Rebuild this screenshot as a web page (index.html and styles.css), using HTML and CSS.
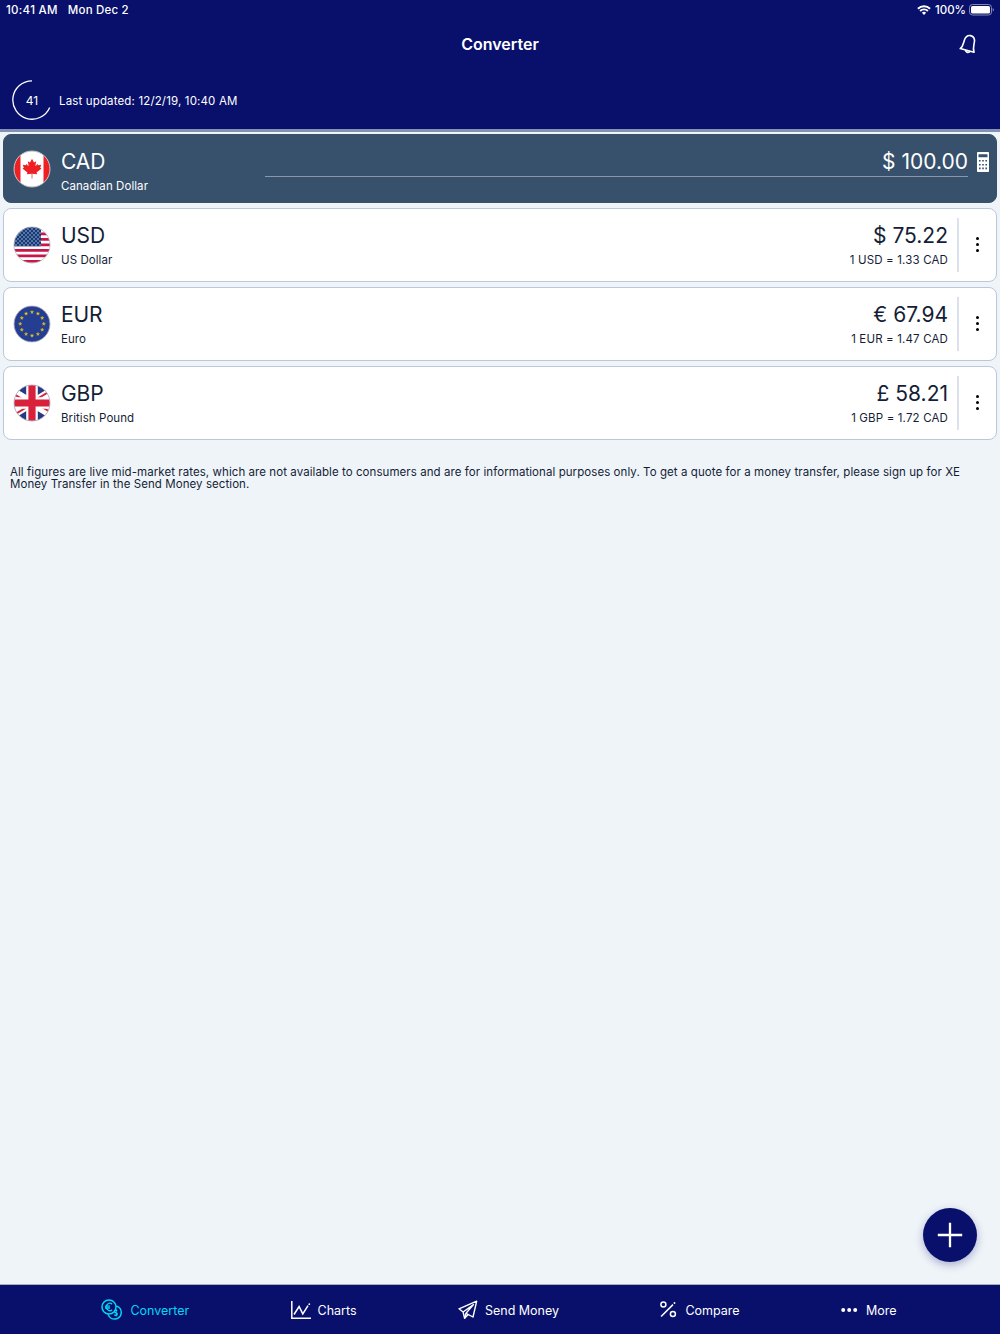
FILE: index.html
```html
<!DOCTYPE html>
<html lang="en">
<head>
  <meta charset="UTF-8" />
  <meta name="viewport" content="width=device-width, initial-scale=1.0" />
  <title>Converter</title>
  <link rel="stylesheet" href="styles.css">
</head>
<body>
  <header class="header">
    <div class="status-bar">
      <span class="time">10:41 AM</span>
      <span class="date">Mon Dec 2</span>
      <svg class="wifi" width="14" height="10" viewBox="0 0 14 10" fill="none" stroke="#fff" stroke-width="1.9">
        <path d="M.9 3.7a8.8 8.8 0 0 1 12.2 0M3.1 6a5.6 5.6 0 0 1 7.8 0" />
        <path d="M7 9.9 4.9 7.7a3 3 0 0 1 4.2 0z" fill="#fff" stroke="none" />
      </svg>
      <span class="percent">100%</span>
      <svg class="battery" width="25" height="12" viewBox="0 0 25 12">
        <rect x=".5" y=".5" width="22" height="10.5" rx="3" fill="none" stroke="#8488b5" />
        <rect x="2" y="2" width="19" height="7.5" rx="1.6" fill="#fff" />
        <path d="M23.7 4v3.6q1.2-.6 1.2-1.8T23.7 4z" fill="#8488b5" />
      </svg>
    </div>
    <div class="title-bar">
      <h1>Converter</h1>
      <svg class="bell" width="20" height="22" viewBox="0 0 20 22" fill="none" stroke="#fff" stroke-width="1.6" stroke-linejoin="round" stroke-linecap="round">
        <path d="M2.2 15.6C5 13.5 5.2 11.5 6.2 7.7C7.200 4 9.300 2.200 12.600 2.600C16 3.400 17 6 16.300 9.600C15.500 13.500 14.800 15.500 16 19.300Z" />
        <path d="M7.600 17.800q1.700 2.600 4 1" />
      </svg>
    </div>
    <div class="update-row">
      <div class="timer">
        <svg width="40" height="40" viewBox="0 0 40 40" fill="none" stroke="#fff" stroke-width="1.3">
          <path d="M20 .8A19.200 19.200 0 1 0 37.700 27.500" />
        </svg>
        <span>41</span>
      </div>
      <span class="updated">Last updated: 12/2/19, 10:40 AM</span>
    </div>
  </header>

  <main class="content">
    <section class="card base">
      <svg class="flag" width="38" height="38" viewBox="0 0 38 38">
        <clipPath id="round"><circle cx="19" cy="19" r="18" /></clipPath>
        <g clip-path="url(#round)">
          <rect width="38" height="38" fill="#fff" />
          <path d="M0 0h7.500v38H0zM30.500 0H38v38h-7.500z" fill="#ee2024" />
          <path d="M19 8.800 21 12.400 23.200 11.300 22.300 16.300 24.700 13.900 25.200 15.300 28.200 14.800 27.200 17.700 28.500 18.500 23.600 22.500 24.100 24.300 19.350 23.700V28.500h-.7V23.700L13.900 24.300 14.400 22.500 9.500 18.500 10.800 17.700 9.800 14.800 12.800 15.300 13.300 13.900 15.700 16.300 14.800 11.300 17 12.400z" fill="#ee2024" />
        </g>
        <circle cx="19" cy="19" r="18" fill="none" stroke="#b9bdc3" />
      </svg>
      <div class="currency">
        <div class="code">CAD</div>
        <div class="name">Canadian Dollar</div>
      </div>
      <div class="amount-input">$ 100.00</div>
      <svg class="calculator" width="12" height="20" viewBox="0 0 12 20">
        <rect width="12" height="20" rx=".8" fill="#fff" />
        <g fill="#37506c">
          <rect x="1.500" y="2.200" width="9" height="3" rx=".5" />
          <path d="M2 8h1.600v1.600H2zM5.200 8h1.600v1.600H5.200zM8.400 8H10v1.600H8.400zM2 12h1.600v1.600H2zM5.200 12h1.600v1.600H5.200zM8.400 12H10v1.600H8.400zM2 15.600h1.600v1.600H2zM5.200 15.600h1.600v1.600H5.200zM8.400 15.600H10v1.600H8.400z" />
        </g>
      </svg>
    </section>

    <section class="card">
      <svg class="flag" width="38" height="38" viewBox="0 0 38 38">
        <defs>
          <pattern id="stars" width="4" height="4" patternUnits="userSpaceOnUse">
            <circle cx="1" cy="1" r=".75" fill="#c3cce0" /><circle cx="3" cy="3" r=".75" fill="#c3cce0" />
          </pattern>
        </defs>
        <g clip-path="url(#round)">
          <rect width="38" height="38" fill="#fff" />
          <path d="M0 2.400h38M0 7.900h38M0 13.400h38M0 18.900h38M0 24.400h38M0 29.900h38M0 35.400h38" stroke="#c8164a" stroke-width="2.750" />
          <rect width="28" height="20.200" fill="#143b78" />
          <rect width="28" height="20" fill="url(#stars)" />
        </g>
        <circle cx="19" cy="19" r="18" fill="none" stroke="#b8b8c2" stroke-width=".8" />
      </svg>
      <div class="currency">
        <div class="code">USD</div>
        <div class="name">US Dollar</div>
      </div>
      <div class="rate">
        <div class="value">$ 75.22</div>
        <div class="unit">1 USD = 1.33 CAD</div>
      </div>
      <div class="menu"><i></i><i></i><i></i></div>
    </section>

    <section class="card">
      <svg class="flag" width="38" height="38" viewBox="0 0 38 38">
        <circle cx="19" cy="19" r="18" fill="#253e91" stroke="#b5b5b8" stroke-width=".8" />
        <g fill="#e5c61b">
          <path id="star" d="M19 5.300l.45 1.150 1.250.05-1 .8.350 1.200L19 7.800l-1.050.7.350-1.200-1-.8 1.250-.05z" stroke="#e5c61b" stroke-width=".3" />
          <use href="#star" x="5.900" y="1.600" />
          <use href="#star" x="10.200" y="5.900" />
          <use href="#star" x="11.800" y="11.800" />
          <use href="#star" x="10.200" y="17.700" />
          <use href="#star" x="5.900" y="22" />
          <use href="#star" y="23.600" />
          <use href="#star" x="-5.900" y="22" />
          <use href="#star" x="-10.200" y="17.700" />
          <use href="#star" x="-11.800" y="11.800" />
          <use href="#star" x="-10.200" y="5.900" />
          <use href="#star" x="-5.900" y="1.600" />
        </g>
      </svg>
      <div class="currency">
        <div class="code">EUR</div>
        <div class="name">Euro</div>
      </div>
      <div class="rate">
        <div class="value">€ 67.94</div>
        <div class="unit">1 EUR = 1.47 CAD</div>
      </div>
      <div class="menu"><i></i><i></i><i></i></div>
    </section>

    <section class="card">
      <svg class="flag" width="38" height="38" viewBox="0 0 38 38">
        <g clip-path="url(#round)">
          <rect width="38" height="38" fill="#293b80" />
          <path d="M-9 2 47 36M47 2-9 36" stroke="#fff" stroke-width="8" />
          <path d="M-9 4 19 21M47 1 19 18M-9 37 19 20M47 34 19 17" stroke="#d8213b" stroke-width="2" />
          <path d="M19 0v38M0 19h38" stroke="#fff" stroke-width="11.600" />
          <path d="M19 0v38M0 19h38" stroke="#d8213b" stroke-width="7.200" />
        </g>
        <circle cx="19" cy="19" r="18" fill="none" stroke="#b8b8c2" stroke-width=".8" />
      </svg>
      <div class="currency">
        <div class="code">GBP</div>
        <div class="name">British Pound</div>
      </div>
      <div class="rate">
        <div class="value">£ 58.21</div>
        <div class="unit">1 GBP = 1.72 CAD</div>
      </div>
      <div class="menu"><i></i><i></i><i></i></div>
    </section>

    <p class="disclaimer">All figures are live mid-market rates, which are not available to consumers and are for informational purposes only. To get a quote for a money transfer, please sign up for XE<br>Money Transfer in the Send Money section.</p>

    <button class="add" aria-label="Add currency">
      <svg width="26" height="26" viewBox="0 0 26 26" stroke="#fff" stroke-width="2.300"><path d="M13 .8v24.400M.8 13h24.400" /></svg>
    </button>
  </main>

  <nav class="tabs">
    <a class="tab active">
      <svg width="22" height="22" viewBox="0 0 22 22" fill="none" stroke="currentColor" stroke-width="1.500">
        <circle cx="8" cy="8" r="7" />
        <path d="M15.200 6.900a6.700 6.700 0 1 1-8.100 8.200" />
        <path d="M11.200 5.200a3.600 3.600 0 1 0 0 5.500M4 7.200h5M4 9h5" stroke-width="1.300" />
        <path d="M16.200 11.900c-1.200-1.200-3.400-.3-2.700 1.100.7 1.300 2.600.5 2.900 2 .1 1.600-2.300 1.900-3.300.6M15.200 10.300v7.200" stroke-width="1.100" />
      </svg>
      <span>Converter</span>
    </a>
    <a class="tab">
      <svg width="20" height="20" viewBox="0 0 20 20" fill="none" stroke="currentColor" stroke-width="1.500">
        <path d="M.8 1v17.200H20" />
        <path d="M3 14.500 8.100 6.500l3.700 7.400L17 5.600" />
        <circle cx="18.300" cy="4.200" r=".9" fill="currentColor" stroke="none" />
      </svg>
      <span>Charts</span>
    </a>
    <a class="tab">
      <svg width="20" height="20" viewBox="0 0 20 20" fill="none" stroke="currentColor" stroke-width="1.400" stroke-linejoin="round">
        <path d="M1 8.800 18.700 1.200 15 17 10.200 14.500 6.600 18.300 5.100 12z" />
        <path d="M5.100 12 15.500 4.600 8 13.300 6.600 18.300M8 13.300l2.200 1.200" />
      </svg>
      <span>Send Money</span>
    </a>
    <a class="tab">
      <svg width="18" height="20" viewBox="0 0 18 20" fill="none" stroke="currentColor" stroke-width="1.500">
        <circle cx="3.400" cy="4.600" r="2.500" />
        <circle cx="12.900" cy="14" r="2.500" />
        <path d="M1.100 16.500 13 4.600" />
        <circle cx="14.500" cy="3" r=".9" fill="currentColor" stroke="none" />
      </svg>
      <span>Compare</span>
    </a>
    <a class="tab">
      <svg width="18" height="6" viewBox="0 0 18 6" fill="currentColor">
        <circle cx="2.200" cy="3" r="2" /><circle cx="8.200" cy="3" r="2" /><circle cx="14.200" cy="3" r="2" />
      </svg>
      <span>More</span>
    </a>
  </nav>
</body>
</html>
```
FILE: styles.css
```css
:root {
  --navy: #08106b;
  --ink: #141e37;
  --bg: #eff4f9;
  --line: #bdc7dc;
}

* {
  box-sizing: border-box;
}

body {
  margin: 0;
  height: 1334px;
  display: flex;
  flex-direction: column;
  font-family: Inter, "Liberation Sans", sans-serif;
  font-size: 11.5px;
  letter-spacing: 0.07px;
  color: var(--ink);
  background: var(--bg);
}

svg {
  display: block;
  flex-shrink: 0;
}

.header {
  height: 132px;
  background: var(--navy);
  color: #fff;
  border-bottom: 3px solid #8391b5;
}

.status-bar {
  height: 19px;
  display: flex;
  align-items: center;
  padding: 0 6px;
  font-weight: 500;
  letter-spacing: 0.2px;
}

.time {
  letter-spacing: 0.3px;
}

.date {
  margin-left: 10px;
}

.wifi {
  margin-left: auto;
}

.percent {
  margin: 0 3px 0 4px;
  letter-spacing: 0;
}

.title-bar {
  height: 50px;
  display: grid;
  grid-template-columns: 1fr auto 1fr;
  align-items: center;
  padding: 0 22px;
}

h1 {
  grid-column: 2;
  margin: 0;
  font-size: 16px;
  font-weight: 600;
  letter-spacing: 0;
}

.bell {
  justify-self: end;
}

.update-row {
  height: 60px;
  display: flex;
  align-items: center;
  margin-top: 1px;
  padding-left: 12px;
}

.timer {
  display: grid;
  place-items: center;
  font-size: 12px;
}

.timer > * {
  grid-area: 1 / 1;
}

.updated {
  margin-left: 7px;
  padding-top: 2px;
  letter-spacing: 0.15px;
}

.content {
  flex: 1;
  display: flex;
  flex-direction: column;
  gap: 5px;
  padding: 2px 3px 0;
}

.card {
  height: 74px;
  display: flex;
  align-items: center;
  padding-left: 9px;
  background: #fff;
  border: 1px solid var(--line);
  border-radius: 8px;
}

.card.base {
  height: 69px;
  background: #37506c;
  border-color: #37506c;
  color: #fff;
}

.currency {
  margin-left: 10px;
}

.base .currency {
  padding-top: 5px;
}

.code,
.value {
  font-size: 21px;
  line-height: 26px;
  letter-spacing: -0.1px;
}

.name,
.unit {
  margin-top: 3px;
  line-height: 16px;
}

.amount-input {
  width: 703px;
  height: 28px;
  margin: -11px 9px 0 auto;
  border-bottom: 1px solid #8897a9;
  font-size: 21px;
  line-height: 26px;
  letter-spacing: 0;
  text-align: right;
}

.calculator {
  margin: -14px 7px 0 0;
}

.rate {
  margin-left: auto;
  text-align: right;
}

.value {
  letter-spacing: 0;
}

.unit {
  letter-spacing: 0.15px;
}

.menu {
  width: 39px;
  height: 54px;
  margin-left: 9px;
  padding-bottom: 1px;
  display: flex;
  flex-direction: column;
  align-items: center;
  justify-content: center;
  gap: 3px;
  border-left: 2px solid #dbe1ed;
}

.menu i {
  width: 3px;
  height: 3px;
  border-radius: 50%;
  background: #000;
}

.disclaimer {
  margin: 21px 0 0 7px;
  line-height: 12px;
  white-space: nowrap;
}

.add {
  width: 54px;
  height: 54px;
  margin: auto 20.5px 22.5px auto;
  padding: 0;
  display: grid;
  place-items: center;
  border: none;
  border-radius: 50%;
  background: var(--navy);
  box-shadow: 0 3px 9px rgba(8, 16, 107, 0.3);
}

.tabs {
  height: 50px;
  display: flex;
  align-items: center;
  justify-content: space-evenly;
  padding-right: 2px;
  background: var(--navy);
  border-top: 1px solid #a9adb9;
  color: #fff;
  font-size: 12.5px;
  letter-spacing: 0;
}

.tab {
  display: flex;
  align-items: center;
  gap: 7px;
}

.tab span {
  padding-top: 2px;
}

.tab.active {
  color: #00d7f4;
}
```
